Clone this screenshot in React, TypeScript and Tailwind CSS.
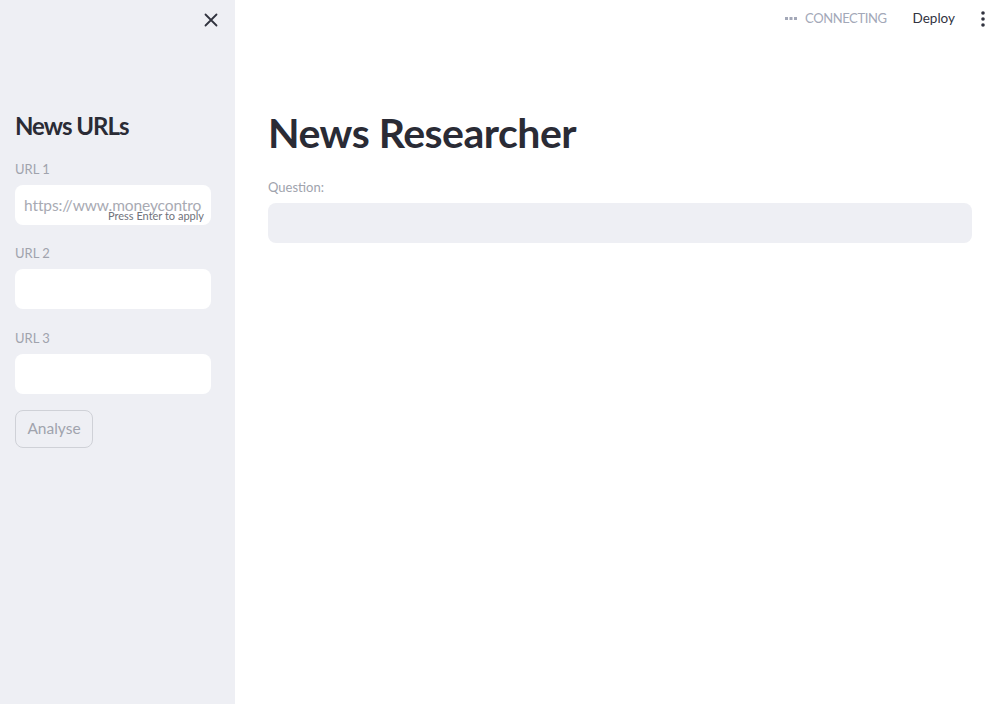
import React from "react";

const font = { fontFamily: "Lato, 'Noto Sans', sans-serif" };

function Field({ label, placeholder, hint }: { label: string; placeholder?: string; hint?: boolean }) {
  return (
    <div className="flex flex-col">
      <div className="text-[13px] leading-[20px] text-[#a0a3ad] mb-[6px]">{label}</div>
      <div className="relative h-[40px] w-[196px] rounded-[8px] bg-white">
        {placeholder && (
          <div className="absolute left-[9px] right-[9px] top-[9px] overflow-hidden text-[15.5px] leading-[22px] text-[#a8aab3] whitespace-nowrap tracking-[-0.1px]">
            {placeholder}
          </div>
        )}
        {hint && (
          <div className="absolute right-[7px] bottom-[3px] text-[11px] leading-[13px] text-[#6f717a] whitespace-nowrap">
            Press Enter to apply
          </div>
        )}
      </div>
    </div>
  );
}

export default function App() {
  return (
    <div className="flex w-[989px] h-[704px] bg-white overflow-hidden" style={font}>
      <aside className="w-[235px] h-full bg-[#eeeff4] flex flex-col px-[15px] relative">
        <div className="absolute left-[204px] top-[13px]">
          <svg width="14" height="14" viewBox="0 0 14 14">
            <path d="M1.5 1.5 L12.5 12.5 M12.5 1.5 L1.5 12.5" stroke="#31333f" strokeWidth="1.8" strokeLinecap="round" />
          </svg>
        </div>
        <h2 className="mt-[108px] text-[24px] leading-[36px] font-bold text-[#2a2b35] tracking-[-1px]">News URLs</h2>
        <div className="mt-[15px]">
          <Field label="URL 1" placeholder="https://www.moneycontrol.com" hint />
        </div>
        <div className="mt-[18px]">
          <Field label="URL 2" />
        </div>
        <div className="mt-[19px]">
          <Field label="URL 3" />
        </div>
        <button className="mt-[16px] w-[78px] h-[38px] rounded-[8px] border border-[#cfd1d7] text-[15.5px] text-[#a0a3ad] bg-transparent text-center">
          Analyse
        </button>
      </aside>
      <main className="flex-1 flex flex-col relative">
        <div className="h-[37px] flex items-center justify-end pr-[4px]">
          <div className="flex items-center gap-[8px] text-[13px] text-[#a3a8b8] mr-[26px] tracking-[-0.4px]">
            <svg width="12" height="4" viewBox="0 0 12 4">
              <rect x="0" y="0" width="3" height="3" fill="#a3a8b8" />
              <rect x="4.5" y="0" width="3" height="3" fill="#a3a8b8" />
              <rect x="9" y="0" width="3" height="3" fill="#a3a8b8" />
            </svg>
            <span>CONNECTING</span>
          </div>
          <span className="text-[13.5px] text-[#31333f] mr-[26px]">Deploy</span>
          <svg width="4" height="16" viewBox="0 0 4 16">
            <circle cx="2" cy="2" r="1.8" fill="#31333f" />
            <circle cx="2" cy="8" r="1.8" fill="#31333f" />
            <circle cx="2" cy="14" r="1.8" fill="#31333f" />
          </svg>
        </div>
        <div className="pl-[33px] pr-[17px]">
          <h1 className="mt-[69px] text-[41px] leading-[54px] font-bold text-[#2a2b35] tracking-[-0.5px]">News Researcher</h1>
          <div className="mt-[17px] text-[13px] leading-[20px] text-[#a0a3ad]">Question:</div>
          <div className="mt-[6px] h-[40px] rounded-[8px] bg-[#eeeff4]"></div>
        </div>
      </main>
    </div>
  );
}
